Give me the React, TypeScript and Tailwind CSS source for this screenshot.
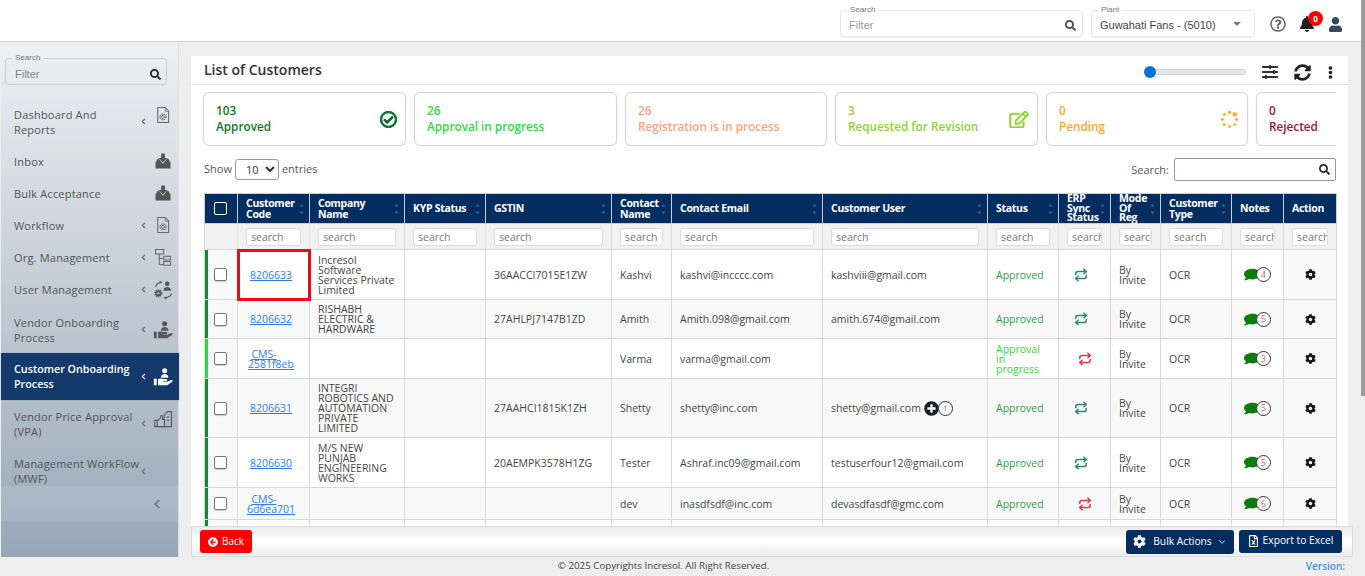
import React from "react";
import { FaSearch, FaBell, FaUser, FaRegQuestionCircle, FaSyncAlt, FaEllipsisV, FaRegCheckCircle, FaRegEdit, FaCog, FaArrowCircleLeft, FaRegFileExcel, FaPlusCircle, FaComment, FaSlidersH } from "react-icons/fa";
import { ChevronLeft, ChevronDown, Repeat } from "lucide-react";

const DocGear = () => (
  <svg viewBox="0 0 24 24" className="w-[18px] h-[18px] text-[#666]" fill="none" stroke="currentColor">
    <path d="M5 2h10l4.500 4.500V22H5z" strokeWidth="1.400" />
    <path d="M15 2v5h4.500" strokeWidth="1" />
    <circle cx="12" cy="14.500" r="2" strokeWidth="1.200" />
    <circle cx="12" cy="14.500" r="4" strokeWidth="1.500" strokeDasharray="2 1.200" />
  </svg>
);
const Tray = () => (
  <svg viewBox="0 0 24 24" className="w-[18px] h-[18px] text-[#555]" fill="currentColor">
    <path d="M9.500 2h5v6h3.500l-6 6-6-6h3.500z" />
    <path d="M5 9h1.500l5.500 6.500L17.500 9H19l3 5v8H2v-8z" />
  </svg>
);
const OrgTree = () => (
  <svg viewBox="0 0 24 24" className="w-[18px] h-[18px] text-[#666]" fill="none" stroke="currentColor" strokeWidth="1.300">
    <rect x="2" y="2" width="11" height="6" />
    <path d="M7 8v14h6M7 14h6" />
    <rect x="13" y="11" width="9" height="5" />
    <rect x="13" y="18" width="9" height="5" />
  </svg>
);
const UserMgmt = () => (
  <svg viewBox="0 0 24 24" className="w-[20px] h-[20px] text-[#555]" fill="none" stroke="currentColor">
    <circle cx="17" cy="4.500" r="2.800" fill="currentColor" stroke="none" />
    <path d="M12.500 13c0-3 2-4.500 4.500-4.500s4.500 1.500 4.500 4.500z" fill="currentColor" stroke="none" />
    <circle cx="6.500" cy="16" r="2.500" strokeWidth="2.500" />
    <circle cx="6.500" cy="16" r="4.300" strokeWidth="1.400" strokeDasharray="1.500 1.200" />
    <path d="M3 8c1-3 3-5 7-5l-2-1.500M22 16c0 3-2 5-8 5l2 2" strokeWidth="1.300" />
  </svg>
);
const HandUser = ({ white }: { white?: boolean }) => (
  <svg viewBox="0 0 24 24" className={white ? "w-[20px] h-[20px] text-white" : "w-[20px] h-[20px] text-[#555]"} fill="currentColor">
    <circle cx="14" cy="4.500" r="3" />
    <path d="M9.500 13c0-3 2-4.500 4.500-4.500s4.500 1.500 4.500 4.500z" />
    <path d="M1 14h3.500v8H1z" />
    <path d="M6 14.500c2-1 4-1 6 0h4c1.500 0 1.500 2.500 0 2.500h-4v.6h5l5-2c1.500-.5 2 1 1 2l-6 4.400H6z" />
  </svg>
);
const ThumbDoc = () => (
  <svg viewBox="0 0 24 24" className="w-[19px] h-[19px] text-[#555]" fill="none" stroke="currentColor" strokeWidth="1.300">
    <path d="M13 21V6l4-4h5v19z" />
    <path d="M16 9h3M16 13h3" />
    <path d="M1 13h3v8H1zM4 14l4-4 1-3c2 0 2 2 1.500 5H13v9H6l-2-1" fill="#b4bfca" />
  </svg>
);

const menu: { label: string[]; h: string; chev?: boolean; icon?: React.ReactNode; active?: boolean; iconCls?: string; top?: boolean }[] = [
  { label: ["Dashboard And", "Reports"], h: "h-[47px]", chev: true, icon: <DocGear />, iconCls: "self-start mt-[8px]" },
  { label: ["Inbox"], h: "h-[32px]", icon: <Tray /> },
  { label: ["Bulk Acceptance"], h: "h-[32px]", icon: <Tray /> },
  { label: ["Workflow"], h: "h-[32px]", chev: true, icon: <DocGear /> },
  { label: ["Org. Management"], h: "h-[32px]", chev: true, icon: <OrgTree /> },
  { label: ["User Management"], h: "h-[33px]", chev: true, icon: <UserMgmt /> },
  { label: ["Vendor Onboarding", "Process"], h: "h-[47px]", chev: true, icon: <HandUser /> },
  { label: ["Customer Onboarding", "Process"], h: "h-[47px]", chev: true, icon: <HandUser white />, active: true },
  { label: ["Vendor Price Approval", "(VPA)"], h: "h-[47px]", chev: true, icon: <ThumbDoc />, iconCls: "self-start mt-[10px]" },
  { label: ["Management WorkFlow", "(MWF)"], h: "h-[39px]", chev: true, top: true },
];

const kpis = [
  { n: "103", t: "Approved", c: "text-[#0b7a25]", w: "w-[203px]", icon: <FaRegCheckCircle stroke="currentColor" strokeWidth={28} className="w-[17px] h-[17px] text-[#0b6b2a]" /> },
  { n: "26", t: "Approval in progress", c: "text-[#2bdc3c]", w: "w-[203px]" },
  { n: "26", t: "Registration is in process", c: "text-[#ffa27c]", w: "w-[202px]" },
  { n: "3", t: "Requested for Revision", c: "text-[#8fd32f]", w: "w-[203px]", icon: <FaRegEdit stroke="currentColor" strokeWidth={14} className="w-[20px] h-[17px] text-[#8fd32f]" /> },
  { n: "0", t: "Pending", c: "text-[#ffa62b]", w: "w-[202px]", icon: (
    <svg viewBox="0 0 24 24" className="w-[19px] h-[19px] text-[#ffa62b]" fill="currentColor">
      <circle cx="12" cy="3" r="2" /><circle cx="18.500" cy="5.500" r="2.800" /><circle cx="21" cy="12" r="1.800" /><circle cx="18.500" cy="18.500" r="1.800" />
      <circle cx="12" cy="21" r="1.800" /><circle cx="5.500" cy="18.500" r="1.800" /><circle cx="3" cy="12" r="1.800" /><circle cx="5.500" cy="5.500" r="1.800" />
    </svg>
  ) },
  { n: "0", t: "Rejected", c: "text-[#a0132f]", w: "w-[202px]" },
];

const cols = [33, 72, 95, 81, 126, 60, 151, 165, 71, 52, 50, 71, 52, 53];
const heads: { t: string[]; sort?: boolean; tight?: boolean }[] = [
  { t: ["Customer", "Code"], sort: true },
  { t: ["Company", "Name"], sort: true },
  { t: ["KYP Status"], sort: true },
  { t: ["GSTIN"], sort: true },
  { t: ["Contact", "Name"], sort: true },
  { t: ["Contact Email"], sort: true },
  { t: ["Customer User"], sort: true },
  { t: ["Status"], sort: true },
  { t: ["ERP", "Sync", "Status"], sort: true, tight: true },
  { t: ["Mode", "Of", "Reg"], sort: true, tight: true },
  { t: ["Customer", "Type"], sort: true },
  { t: ["Notes"] },
  { t: ["Action"] },
];

type Row = {
  h: string; bar: string; stripe: boolean; code: string[]; company: string[]; gst: string; name: string; email: string; user: string;
  status: string[]; light?: boolean; sync: "g" | "r"; note: string; plus?: boolean; box?: boolean;
};
const G = "shadow-[inset_3px_0_0_#128a2e]";
const rows: Row[] = [
  { h: "h-[50px]", bar: G, stripe: false, code: ["8206633"], company: ["Incresol", "Software", "Services Private", "Limited"], gst: "36AACCI7015E1ZW", name: "Kashvi", email: "kashvi@incccc.com", user: "kashviii@gmail.com", status: ["Approved"], sync: "g", note: "4", box: true },
  { h: "h-[39px]", bar: G, stripe: true, code: ["8206632"], company: ["RISHABH", "ELECTRIC &", "HARDWARE"], gst: "27AHLPJ7147B1ZD", name: "Amith", email: "Amith.098@gmail.com", user: "amith.674@gmail.com", status: ["Approved"], sync: "g", note: "5" },
  { h: "h-[40px]", bar: "shadow-[inset_3px_0_0_#27dd45]", stripe: false, code: ["CMS-", "2581f8eb"], company: [], gst: "", name: "Varma", email: "varma@gmail.com", user: "", status: ["Approval", "in", "progress"], light: true, sync: "r", note: "3" },
  { h: "h-[59px]", bar: G, stripe: true, code: ["8206631"], company: ["INTEGRI", "ROBOTICS AND", "AUTOMATION", "PRIVATE", "LIMITED"], gst: "27AAHCI1815K1ZH", name: "Shetty", email: "shetty@inc.com", user: "shetty@gmail.com", plus: true, status: ["Approved"], sync: "g", note: "5" },
  { h: "h-[50px]", bar: G, stripe: false, code: ["8206630"], company: ["M/S NEW", "PUNJAB", "ENGINEERING", "WORKS"], gst: "20AEMPK3578H1ZG", name: "Tester", email: "Ashraf.inc09@gmail.com", user: "testuserfour12@gmail.com", status: ["Approved"], sync: "g", note: "5" },
  { h: "h-[32px]", bar: G, stripe: true, code: ["CMS-", "6d6ea701"], company: [], gst: "", name: "dev", email: "inasdfsdf@inc.com", user: "devasdfasdf@gmc.com", status: ["Approved"], sync: "r", note: "6" },
];

const Lines = ({ t }: { t: string[] }) => <>{t.map((l) => <div key={l}>{l}</div>)}</>;
const Sort = () => (
  <svg viewBox="0 0 6 14" className="absolute right-[5px] top-1/2 -translate-y-1/2 w-[5px] h-[12px] text-white/25" fill="currentColor">
    <path d="M3 1l2.500 3h-5zM3 13L.5 10h5z" />
  </svg>
);
const Legend = ({ t }: { t: string }) => (
  <legend className="ml-[6px] px-[3px] text-[8px] leading-[8px] text-[#777] font-['Liberation_Sans',sans-serif]">{t}</legend>
);

export default function App() {
  return (
    <div className="flex h-[576px] w-[1365px] overflow-hidden bg-[#eeeeee] font-['Open_Sans',sans-serif] text-[#444]">
      <div className="flex flex-col w-[1361px]">
        {/* top bar */}
        <header className="h-[42px] shrink-0 bg-white border-b border-[#d6d6d6] flex items-start pl-[840px]">
          <fieldset className="w-[243px] h-[31px] mt-[6px] border border-[#e6e6e6] rounded-[4px] shadow-[0_1px_1px_#eee]">
            <Legend t="Search" />
            <div className="flex items-center pl-[8px] pr-[6px] h-[22px]">
              <span className="flex-1 text-[11px] text-[#999] font-['Liberation_Sans',sans-serif]">Filter</span>
              <FaSearch className="w-[11px] h-[11px] text-[#444]" />
            </div>
          </fieldset>
          <fieldset className="w-[164px] h-[31px] mt-[6px] ml-[8px] border border-[#e6e6e6] rounded-[4px] shadow-[0_1px_1px_#eee]">
            <Legend t="Plant" />
            <div className="flex items-center pl-[8px] pr-[13px] h-[22px]">
              <span className="flex-1 text-[11px] text-[#444] font-['Liberation_Sans',sans-serif]">Guwahati Fans - (5010)</span>
              <span className="w-0 h-0 border-x-[4px] border-x-transparent border-t-[4px] border-t-[#777] mb-[3px]" />
            </div>
          </fieldset>
          <div className="flex items-center h-[40px] ml-[15px] mt-[4px]">
            <FaRegQuestionCircle className="w-[16px] h-[16px] text-[#666]" />
            <div className="relative ml-[13px] w-[17px]">
              <FaBell className="w-[16px] h-[16px] text-[#222]" />
              <span className="absolute -top-[5px] left-[9px] w-[15px] h-[15px] rounded-full bg-[#f00] text-white text-[8px] font-bold flex items-center justify-center">0</span>
            </div>
            <FaUser className="ml-[12px] w-[15px] h-[15px] text-[#37495e]" />
          </div>
        </header>

        <div className="flex-1 min-h-0 flex">
          {/* sidebar */}
          <aside className="w-[178px] ml-[1px] shrink-0 flex flex-col bg-gradient-to-b from-[#eef0f2] to-[#98a7b8] border-r border-[#dcdfe3] text-[#555]">
            <div className="px-[4px] h-[56px] pt-[12px]">
              <fieldset className="w-[162px] h-[31px] border border-[#c8cdd2] rounded-[4px]">
                <Legend t="Search" />
                <div className="flex items-center pl-[9px] pr-[5px] h-[24px]">
                  <span className="flex-1 text-[11px] text-[#888] font-['Liberation_Sans',sans-serif]">Filter</span>
                  <FaSearch className="w-[11px] h-[11px] text-[#222]" />
                </div>
              </fieldset>
            </div>
            {menu.map((m) => (
              <div
                key={m.label[0]}
                className={
                  m.active
                    ? `${m.h} -mr-[1px] flex items-center pl-[13px] bg-[#143a6b] text-white font-semibold shadow-[0_0_1px_#889]`
                    : m.top
                    ? `${m.h} flex items-start pt-[9px] pl-[13px]`
                    : `${m.h} flex items-center pl-[13px]`
                }
              >
                <div className={m.active ? "w-[124px] text-[10.75px] leading-[15px] whitespace-nowrap" : "w-[124px] text-[11px] leading-[15px] tracking-[0.2px] whitespace-nowrap"}>
                  <Lines t={m.label} />
                </div>
                <div className={m.top ? "w-[10px] flex justify-center mt-[11px]" : "w-[10px] flex justify-center"}>
                  {m.chev && <ChevronLeft strokeWidth={3} className={m.active ? "w-[9px] h-[9px] text-[#dde]" : "w-[9px] h-[9px] text-[#667]"} />}
                </div>
                <div className={`ml-[5px] w-[20px] flex justify-center ${m.iconCls ?? ""}`}>{m.icon}</div>
              </div>
            ))}
            <div className="h-[35px] bg-white/10 flex items-center justify-end pr-[14px]">
              <ChevronLeft strokeWidth={3} className="w-[14px] h-[14px] text-[#6b7785]" />
            </div>
            <div className="flex-1" />
          </aside>

          {/* main */}
          <main className="flex-1 min-w-0 flex flex-col pl-[12px] pr-[8px] pt-[14px]">
            <section className="mr-[5px] flex-1 min-h-0 bg-white flex flex-col overflow-hidden">
              <div className="h-[29px] shrink-0 border-b border-[#e2e2e2] flex items-center pl-[13px] pr-[11px]">
                <h1 className="flex-1 text-[14px] font-semibold text-[#333] mb-[2px]">List of Customers</h1>
                <div className="flex items-center mt-[4px]">
                  <div className="relative w-[102px] h-[6px] rounded-full bg-[#e4e4e4] border border-[#cfcfcf] mr-[15px]">
                    <span className="absolute -left-[1px] -top-[4px] w-[12px] h-[12px] rounded-full bg-[#0b6fd8]" />
                  </div>
                  <FaSlidersH className="w-[18px] h-[16px] text-[#333]" />
                  <FaSyncAlt className="ml-[15px] w-[17px] h-[17px] text-[#222]" />
                  <FaEllipsisV className="ml-[13px] w-[13px] h-[13px] text-[#222]" />
                </div>
              </div>

              <div className="flex-1 min-h-0 overflow-hidden pl-[12px] pr-[12px]">
                <div className="flex gap-[8px] mt-[7px] h-[54px] overflow-hidden">
                  {kpis.map((k) => (
                    <div key={k.t} className={`${k.w} shrink-0 h-[54px] bg-white border border-[#d4d4d4] rounded-[6px] flex items-center pl-[12px] pr-[8px] shadow-[0_0_1px_#ddd] font-semibold ${k.c}`}>
                      <div className="flex-1 text-[11.75px] leading-[16px] pb-[2px]">
                        <div>{k.n}</div>
                        <div>{k.t}</div>
                      </div>
                      {k.icon}
                    </div>
                  ))}
                </div>

                <div className="h-[47px] flex items-center pl-[1px] text-[11px] text-[#555]">
                  <span>Show</span>
                  <select className="mx-[3px] w-[44px] h-[21px] pl-[6px] border border-[#999] rounded-[3px] text-[11px] text-[#333] bg-white">
                    <option>10</option>
                  </select>
                  <span>entries</span>
                  <span className="ml-auto mr-[5px] pt-[1px]">Search:</span>
                  <div className="w-[162px] h-[23px] border border-[#999] rounded-[2px] flex items-center justify-end pr-[5px]">
                    <FaSearch className="w-[11px] h-[11px] text-[#222]" />
                  </div>
                </div>

                <table className="ml-[1px] table-fixed border-collapse w-[1132px] text-[10.5px] leading-[10px] text-[#444]">
                  <colgroup>
                    {cols.map((w, i) => <col key={i} style={{ width: w }} />)}
                  </colgroup>
                  <thead>
                    <tr className="h-[30px] bg-[#042e61] text-white">
                      <th className="border border-[#c9ced6] pr-[2px]">
                        <input type="checkbox" className="appearance-none block mx-auto w-[13px] h-[13px] border border-white rounded-[2px] bg-transparent" />
                      </th>
                      {heads.map((h) => (
                        <th key={h.t.join()} className={h.tight ? "relative border border-[#c9ced6] pl-[8px] text-left font-bold tracking-[-0.3px] leading-[9.5px]" : "relative border border-[#c9ced6] pl-[8px] text-left font-bold tracking-[-0.3px] leading-[11px]"}>
                          <Lines t={h.t} />
                          {h.sort && <Sort />}
                        </th>
                      ))}
                    </tr>
                    <tr className="h-[26px] bg-[#f1f1f1]">
                      <th className="border border-[#d8d8d8]" />
                      {heads.map((h) => (
                        <th key={h.t.join()} className="border border-[#d8d8d8] px-[8px] font-normal">
                          <input placeholder="search" className="block w-full h-[18px] pl-[4px] bg-white border border-[#dcdcdc] rounded-[3px] text-[10.5px] placeholder:text-[#777]" />
                        </th>
                      ))}
                    </tr>
                  </thead>
                  <tbody>
                    {rows.map((r) => (
                      <tr key={r.name} className={r.stripe ? `${r.h} bg-[#f8f8f8]` : `${r.h} bg-white`}>
                        <td className={`border border-[#d8d8d8] bg-[#f8f8f8] pr-[2px] ${r.bar}`}>
                          <input type="checkbox" className="appearance-none block mx-auto w-[13px] h-[13px] border border-[#777] rounded-[2px] bg-white shadow-[0_1px_1px_#ccc]" />
                        </td>
                        <td className={r.box ? "border border-[#d8d8d8] text-center pr-[5px] text-[#2d7fe8] underline outline-[3px] outline-[#ee0a14] -outline-offset-[2px]" : "border border-[#d8d8d8] text-center pr-[5px] text-[#2d7fe8] underline"}>
                          {r.code.length === 2 ? (
                            <>
                              <div className="pr-[14px]">{r.code[0]}</div>
                              <div>{r.code[1]}</div>
                            </>
                          ) : (
                            <Lines t={r.code} />
                          )}
                        </td>
                        <td className="border border-[#d8d8d8] pl-[8px]"><Lines t={r.company} /></td>
                        <td className="border border-[#d8d8d8]" />
                        <td className="border border-[#d8d8d8] pl-[8px] whitespace-nowrap">{r.gst}</td>
                        <td className="border border-[#d8d8d8] pl-[8px]">{r.name}</td>
                        <td className="border border-[#d8d8d8] pl-[8px] whitespace-nowrap">{r.email}</td>
                        <td className="border border-[#d8d8d8] pl-[8px] whitespace-nowrap">
                          <div className="flex items-center">
                            <span>{r.user}</span>
                            {r.plus && (
                              <span className="flex items-center ml-[3px]">
                                <FaPlusCircle className="w-[15px] h-[15px] text-[#16202c]" />
                                <span className="-ml-[1px] w-[15px] h-[15px] rounded-full border border-[#333] bg-white text-[8px] text-[#e44] flex items-center justify-center">1</span>
                              </span>
                            )}
                          </div>
                        </td>
                        <td className={r.light ? "border border-[#d8d8d8] pl-[8px] text-[#34d63f]" : "border border-[#d8d8d8] pl-[8px] text-[#2c9e48]"}><Lines t={r.status} /></td>
                        <td className="border border-[#d8d8d8]">
                          <Repeat strokeWidth={2.6} className={r.sync === "g" ? "ml-[15px] w-[14px] h-[14px] text-[#2a8a6a]" : "mx-auto w-[14px] h-[14px] text-[#dc3545]"} />
                        </td>
                        <td className="border border-[#d8d8d8] pl-[8px]"><Lines t={["By", "Invite"]} /></td>
                        <td className="border border-[#d8d8d8] pl-[8px]">OCR</td>
                        <td className="border border-[#d8d8d8]">
                          <div className="flex items-center justify-center">
                            <FaComment preserveAspectRatio="none" className="w-[17px] h-[13px] text-[#0a7d0a]" />
                            <span className="-ml-[5px] w-[15px] h-[15px] rounded-full border border-[#333] bg-white text-[8.5px] text-[#e55] flex items-center justify-center">{r.note}</span>
                          </div>
                        </td>
                        <td className="border border-[#d8d8d8] bg-[#f8f8f8]">
                          <FaCog className="mx-auto w-[11px] h-[11px] text-[#151515]" />
                        </td>
                      </tr>
                    ))}
                    <tr className="h-[32px] bg-white">
                      {cols.map((w, i) => <td key={i} className={i === 0 ? `border border-[#d8d8d8] bg-[#f8f8f8] ${G}` : i === 13 ? "border border-[#d8d8d8] bg-[#f8f8f8]" : "border border-[#d8d8d8]"} />)}
                    </tr>
                  </tbody>
                </table>
              </div>
            </section>

            <div className="h-[31px] shrink-0 border border-[#dcdcdc] bg-gradient-to-b from-[#ececec] via-white to-[#ececec] flex items-center pl-[8px] pr-[10px]">
              <button className="w-[52px] h-[23px] rounded-[3px] bg-[#ff0000] text-white text-[10px] flex items-center justify-center gap-[4px]">
                <FaArrowCircleLeft className="w-[10px] h-[10px]" />
                <span>Back</span>
              </button>
              <button className="ml-auto w-[108px] h-[24px] rounded-[3px] bg-[#042e61] text-white text-[10.25px] flex items-center justify-center gap-[5px]">
                <FaCog className="w-[13px] h-[13px]" />
                <span className="ml-[2px]">Bulk Actions</span>
                <ChevronDown className="w-[10px] h-[10px]" />
              </button>
              <button className="ml-[5px] w-[103px] h-[23px] rounded-[3px] bg-[#042e61] text-white text-[10.25px] flex items-center justify-center gap-[4px] mb-[1px]">
                <FaRegFileExcel className="w-[11px] h-[12px]" />
                <span>Export to Excel</span>
              </button>
            </div>
          </main>
        </div>

        <footer className="h-[19px] shrink-0 relative flex items-center justify-center pr-[34px] text-[9.75px] text-[#444]">
          <span>© 2025 Copyrights Incresol. All Right Reserved.</span>
          <span className="absolute right-[16px] text-[10px] font-semibold text-[#4a90e2]">Version:</span>
        </footer>
      </div>
      <div className="w-[4px] shrink-0">
        <div className="h-[396px] bg-[#9c9c9c]" />
      </div>
    </div>
  );
}
